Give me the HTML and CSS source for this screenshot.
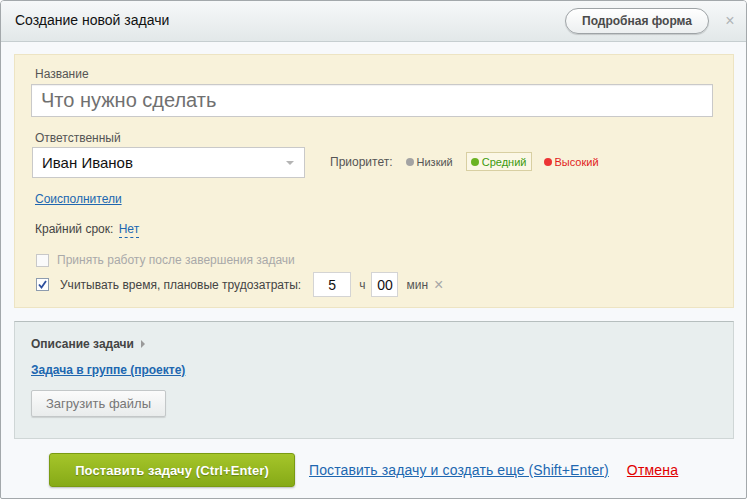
FILE: index.html
```html
<!DOCTYPE html>
<html lang="ru">
<head>
<meta charset="utf-8">
<title>Создание новой задачи</title>
<link rel="stylesheet" href="styles.css">
</head>
<body>
<div class="dialog">
  <div class="dialog-head">
    <div class="dialog-title">Создание новой задачи</div>
    <button class="full-form-btn">Подробная форма</button>
    <span class="close">×</span>
  </div>
  <div class="dialog-body">
    <div class="task-panel">
      <div class="field-label">Название</div>
      <div class="title-input">Что нужно сделать</div>

      <div class="field-label resp-label">Ответственный</div>
      <div class="resp-row">
        <div class="select">
          <span>Иван Иванов</span>
          <span class="select-arrow"></span>
        </div>
        <div class="priority">
          <span class="prio-label">Приоритет:</span>
          <span class="prio prio-low"><i class="dot"></i>Низкий</span>
          <span class="prio prio-mid"><i class="dot"></i>Средний</span>
          <span class="prio prio-high"><i class="dot"></i>Высокий</span>
        </div>
      </div>

      <a class="link coexec">Соисполнители</a>

      <div class="deadline">Крайний срок: <span class="dashed">Нет</span></div>

      <div class="check-row disabled">
        <span class="checkbox"></span>
        <span>Принять работу после завершения задачи</span>
      </div>
      <div class="check-row time-row">
        <span class="checkbox checked">
          <svg width="11" height="11" viewBox="0 0 11 11"><path d="M2 5.5 L4.5 8.5 L9 2" fill="none" stroke="#2d4f9e" stroke-width="1.8"/></svg>
        </span>
        <span class="time-label">Учитывать время, плановые трудозатраты:</span>
        <span class="num-input hours">5</span>
        <span class="unit">ч</span>
        <span class="num-input mins">00</span>
        <span class="unit">мин</span>
        <span class="clear">×</span>
      </div>
    </div>

    <div class="extra-panel">
      <div class="desc-toggle">Описание задачи <span class="tri"></span></div>
      <a class="link group-link">Задача в группе (проекте)</a>
      <button class="upload-btn">Загрузить файлы</button>
    </div>

    <div class="footer">
      <button class="submit-btn">Поставить задачу (Ctrl+Enter)</button>
      <a class="link footer-link">Поставить задачу и создать еще (Shift+Enter)</a>
      <a class="cancel">Отмена</a>
    </div>
  </div>
</div>
</body>
</html>
```
FILE: styles.css
```css
* { box-sizing: border-box; }
html, body { margin: 0; padding: 0; background: #ffffff; }
body { font-family: "Liberation Sans", Arial, sans-serif; }

.dialog {
  width: 747px;
  height: 499px;
  border: 1px solid #a3a8ab;
  border-radius: 4px 4px 2px 2px;
  background: #f7f9fb;
  overflow: hidden;
  display: flex;
  flex-direction: column;
}

.dialog-head {
  height: 41px;
  flex: none;
  background: linear-gradient(#f6f8f9, #e2e8e9);
  border-bottom: 1px solid #c6ced0;
  display: flex;
  align-items: center;
  padding: 0 9px 0 14px;
}
.dialog-title {
  font-size: 14px;
  color: #111;
  flex: 1;
  padding-bottom: 2px;
}
.full-form-btn {
  font-family: inherit;
  font-size: 12px;
  font-weight: bold;
  color: #4a4a4a;
  height: 26px;
  width: 144px;
  border: 1px solid #9ea3a6;
  border-radius: 13px;
  background: linear-gradient(#ffffff, #eceff0);
  box-shadow: 0 1px 1px rgba(0,0,0,0.15);
  padding: 0;
  margin-right: 14px;
  margin-top: -1px;
}
.close {
  color: #b0b4b6;
  font-size: 16px;
  width: 14px;
  text-align: center;
  margin-top: -1px;
}

.dialog-body {
  padding: 12px 12px 0 13px;
  display: flex;
  flex-direction: column;
}

.task-panel {
  height: 254px;
  background: #f8f2da;
  border: 1px solid #ede4c3;
  padding: 12px 20px 0 16px;
}
.field-label {
  font-size: 12px;
  color: #555;
  line-height: 14px;
  margin-left: 4px;
}
.title-input {
  margin-top: 3px;
  width: 682px;
  height: 33px;
  background: #fff;
  border: 1px solid #c9c9c9;
  box-shadow: inset 0 1px 1px rgba(0,0,0,0.06);
  font-size: 20px;
  color: #707070;
  line-height: 31px;
  padding-left: 9px;
}
.resp-label { margin-top: 14px; }
.resp-row {
  display: flex;
  align-items: center;
  margin-top: 2px;
}
.select {
  width: 273px;
  height: 31px;
  margin-left: 1px;
  background: #fff;
  border: 1px solid #c9c9c9;
  display: flex;
  align-items: center;
  justify-content: space-between;
  padding: 0 10px 0 9px;
  font-size: 15px;
  color: #111;
}
.select-arrow {
  width: 0; height: 0;
  border-left: 4px solid transparent;
  border-right: 4px solid transparent;
  border-top: 4px solid #b4b4b4;
  margin-top: 1px;
}
.priority {
  display: flex;
  align-items: center;
  margin-left: 25px;
  margin-top: -2px;
  font-size: 11px;
}
.prio-label { font-size: 12px; color: #555; margin-right: 8px; }
.prio {
  display: inline-flex;
  align-items: center;
  height: 19px;
  padding: 0 4px;
  border: 1px solid transparent;
}
.prio .dot {
  width: 8px; height: 8px;
  border-radius: 50%;
  margin-right: 3px;
  display: inline-block;
}
.prio-low { color: #555; }
.prio-low .dot { background: #a3a3a3; }
.prio-mid { color: #3b9a0e; border-color: #d8cfa2; background: #fbf7e6; margin-left: 8px; }
.prio-mid .dot { background: #6bb324; }
.prio-high { color: #e11b1b; margin-left: 7px; }
.prio-high .dot { background: #ec3535; }

.link { color: #2067b0; text-decoration: underline; cursor: pointer; }
.coexec {
  display: block;
  font-size: 12px;
  margin: 14px 0 0 4px;
  line-height: 14px;
  width: max-content;
}
.deadline {
  font-size: 12px;
  color: #444;
  margin: 16px 0 0 4px;
  line-height: 14px;
}
.dashed {
  color: #2067b0;
  border-bottom: 1px dashed #2067b0;
  margin-left: 2px;
  padding-bottom: 1px;
}

.check-row {
  display: flex;
  align-items: center;
  font-size: 12px;
  color: #444;
  margin-left: 5px;
}
.check-row.disabled { color: #a9a9a9; margin-top: 17px; }
.checkbox {
  width: 13px; height: 13px;
  border: 1px solid #c8c8c8;
  background: #fafafa;
  margin-right: 8px;
  display: inline-flex;
  align-items: center;
  justify-content: center;
}
.checkbox.checked { border-color: #8e9cae; background: #fff; margin-right: 11px; }
.time-row { margin-top: 5px; }
.num-input {
  height: 25px;
  background: #fff;
  border: 1px solid #d4d4d4;
  font-size: 14px;
  color: #111;
  display: inline-flex;
  align-items: center;
  justify-content: center;
}
.hours { width: 38px; margin-left: 12px; }
.mins { width: 27px; }
.unit { color: #555; margin: 0 6px 0 8px; font-size: 12px; }
.clear { color: #a7a7a7; font-size: 16px; margin-left: 0; line-height: 14px; }

.extra-panel {
  margin-top: 13px;
  height: 118px;
  background: #e8eeee;
  border: 1px solid #cfd6d6;
  border-top-color: #b6bebe;
  padding: 15px 16px 0 16px;
}
.desc-toggle {
  font-size: 12px;
  font-weight: bold;
  color: #444;
  line-height: 14px;
  display: flex;
  align-items: center;
}
.tri {
  width: 0; height: 0;
  border-top: 4px solid transparent;
  border-bottom: 4px solid transparent;
  border-left: 4px solid #9a9a9a;
  margin-left: 7px;
}
.group-link {
  display: block;
  width: max-content;
  font-size: 12px;
  font-weight: bold;
  line-height: 14px;
  margin-top: 12px;
}
.upload-btn {
  display: block;
  margin-top: 13px;
  width: 135px;
  height: 27px;
  font-family: inherit;
  font-size: 13px;
  color: #777;
  background: linear-gradient(#fbfbfb, #e9ecec);
  border: 1px solid #c3c7c8;
  border-radius: 2px;
  box-shadow: 0 1px 1px rgba(0,0,0,0.12);
  padding: 0;
}

.footer {
  display: flex;
  align-items: center;
  margin-top: 14px;
  padding-left: 35px;
}
.submit-btn {
  width: 246px;
  height: 34px;
  font-family: inherit;
  font-size: 13px;
  font-weight: bold;
  letter-spacing: 0.1px;
  color: #fff;
  text-shadow: 0 1px 1px rgba(60,80,0,0.5);
  background: linear-gradient(#a5c52a, #86aa17);
  border: 1px solid #7a9b12;
  border-radius: 3px;
  box-shadow: 0 1px 2px rgba(0,0,0,0.25);
  padding: 0;
}
.footer-link { font-size: 14px; letter-spacing: 0.1px; margin-left: 14px; }
.cancel { font-size: 14px; letter-spacing: 0.2px; color: #e00000; text-decoration: underline; margin-left: 18px; }
```
